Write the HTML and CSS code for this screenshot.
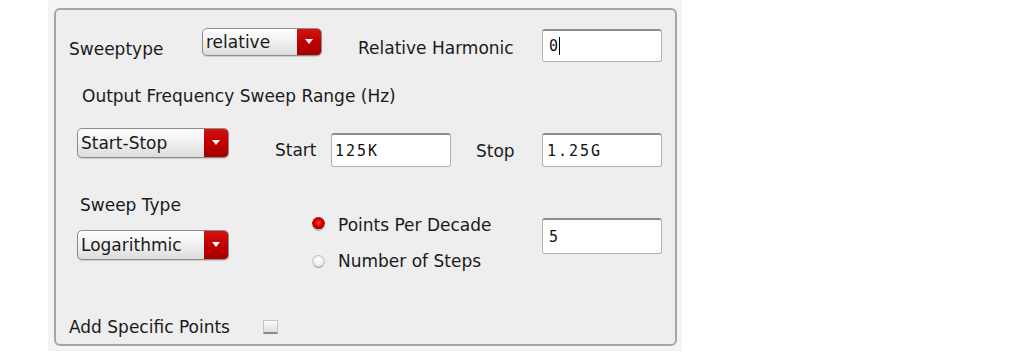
FILE: index.html
```html
<!DOCTYPE html>
<html>
<head>
<meta charset="utf-8">
<link rel="stylesheet" href="styles.css">
</head>
<body>
<div class="outer">
  <div class="panel">
    <div class="row row1">
      <div class="lbl lbl-sweeptype">Sweeptype</div>
      <div class="combo combo-rel"><span class="combo-text">relative</span><span class="combo-btn"><i class="tri"></i></span></div>
      <div class="lbl lbl-relharm">Relative Harmonic</div>
      <div class="field field-rel"><span class="val">0</span><span class="caret"></span></div>
    </div>
    <div class="row row2">
      <div class="lbl">Output Frequency Sweep Range (Hz)</div>
    </div>
    <div class="row row3">
      <div class="combo combo-wide"><span class="combo-text">Start-Stop</span><span class="combo-btn"><i class="tri"></i></span></div>
      <div class="lbl lbl-start">Start</div>
      <div class="field field-start"><span class="val val-start">125K</span></div>
      <div class="lbl lbl-stop">Stop</div>
      <div class="field field-stop"><span class="val">1.25G</span></div>
    </div>
    <div class="row row4">
      <div class="col-left">
        <div class="lbl lbl-sweeptype2">Sweep Type</div>
        <div class="combo combo-wide combo-log"><span class="combo-text">Logarithmic</span><span class="combo-btn"><i class="tri"></i></span></div>
      </div>
      <div class="col-radios">
        <div class="radio-row"><span class="radio on"></span><span class="lbl">Points Per Decade</span></div>
        <div class="radio-row"><span class="radio"></span><span class="lbl">Number of Steps</span></div>
      </div>
      <div class="field field-five"><span class="val">5</span></div>
    </div>
    <div class="row row5">
      <div class="lbl lbl-add">Add Specific Points</div>
      <span class="check"></span>
    </div>
  </div>
</div>
</body>
</html>
```
FILE: styles.css
```css
html, body {
  margin: 0;
  padding: 0;
  background: #ffffff;
}
body {
  font-family: "DejaVu Sans", "Liberation Sans", sans-serif;
  font-size: 17px;
  color: #1a1a1a;
}
.outer {
  margin-left: 48px;
  width: 634px;
  height: 351px;
  background: #f4f4f4;
  padding: 8px 5px 0 6px;
  box-sizing: border-box;
}
.panel {
  width: 623px;
  height: 338px;
  box-sizing: border-box;
  border: 2px solid #a6a6a6;
  border-radius: 6px;
  background: #eeeeee;
  padding-top: 18px;
}
.row {
  display: flex;
  align-items: flex-start;
}
.lbl {
  line-height: 20px;
  height: 20px;
  white-space: nowrap;
}

/* row 1 */
.row1 { height: 34px; }
.lbl-sweeptype { margin-left: 13px; width: 133px; margin-top: 11px; }
.lbl-relharm { margin-left: 36px; width: 184px; margin-top: 10px; }

/* combo box */
.combo {
  display: flex;
  box-sizing: border-box;
  height: 28px;
  border: 1px solid #8c8c8c;
  border-radius: 5px;
  background: linear-gradient(#fefefe 0%, #f2f2f2 45%, #dcdcdc 100%);
  overflow: hidden;
  box-shadow: 0 1px 1px rgba(0,0,0,0.15);
}
.combo-rel { width: 120px; }
.combo-text {
  flex: 1;
  padding-left: 3px;
  line-height: 26px;
  white-space: nowrap;
}
.combo-btn {
  width: 24px;
  background: linear-gradient(#d41212 0%, #c00000 50%, #a20000 100%);
  display: flex;
  align-items: center;
  justify-content: center;
}
.tri {
  display: block;
  width: 0;
  height: 0;
  border-left: 4px solid transparent;
  border-right: 4px solid transparent;
  border-top: 5px solid #ffffff;
  margin-top: -2px;
}

/* text fields */
.field {
  box-sizing: border-box;
  width: 120px;
  height: 34px;
  background: #ffffff;
  border: 1px solid #b4b4b4;
  border-top: 2px solid #8e8e8e;
  border-radius: 3px;
  display: flex;
  align-items: center;
  padding-left: 6px;
  font-family: "DejaVu Sans Mono", "Liberation Mono", monospace;
  font-size: 15px;
  letter-spacing: 2px;
  color: #111;
}
.field-rel { margin-top: 1px; height: 33px; }
.caret {
  display: block;
  width: 0;
  height: 18px;
  border-left: 1px solid #000;
  margin-left: -1px;
}

/* row 2 */
.row2 .lbl { margin-left: 26px; margin-top: 24px; }

/* row 3 */
.row3 { margin-top: 22px; height: 39px; }
.combo-wide { width: 152px; height: 30px; margin-left: 21px; }
.combo-wide .combo-text { line-height: 28px; }
.lbl-start { margin-left: 46px; width: 56px; margin-top: 12px; }
.field-start { margin-top: 5px; padding-left: 3px; }
.lbl-stop { margin-left: 25px; width: 66px; margin-top: 13px; }
.field-stop { margin-top: 5px; padding-left: 4px; }

/* row 4 */
.row4 { height: 110px; }
.col-left { width: 256px; display: flex; flex-direction: column; align-items: flex-start; }
.lbl-sweeptype2 { margin-left: 24px; margin-top: 28px; }
.combo-log { margin-top: 15px; }
.col-radios {
  width: 230px;
  margin-top: 48px;
  display: flex;
  flex-direction: column;
  gap: 16px;
}
.radio-row {
  display: flex;
  align-items: center;
  height: 20px;
}
.radio-row .lbl { margin-left: 13px; }
.radio {
  display: block;
  box-sizing: border-box;
  width: 13px;
  height: 13px;
  border-radius: 50%;
  border: 1px solid #c2c2c2;
  border-bottom-color: #9a9a9a;
  background: radial-gradient(circle at 50% 35%, #ffffff 0%, #f3f3f3 40%, #d0d0d0 100%);
}
.radio.on {
  margin-top: -4px;
  border: none;
  box-shadow: 0 1px 1px rgba(0,0,0,0.3);
  background: radial-gradient(circle at 50% 45%, #ff4a4a 0%, #e00000 35%, #a80000 62%, #c8c8c8 70%, #b8b8b8 100%);
}
.field-five { margin-top: 51px; height: 36px; padding-left: 6px; }

/* row 5 */
.row5 { margin-top: 40px; align-items: center; }
.lbl-add { margin-left: 13px; width: 194px; }
.check {
  display: block;
  box-sizing: border-box;
  width: 15px;
  height: 14px;
  border: 1px solid #c4c4c4;
  border-bottom: 2px solid #8a8a8a;
  background: linear-gradient(#fbfbfb, #dedede);
  border-radius: 1px;
}
```
